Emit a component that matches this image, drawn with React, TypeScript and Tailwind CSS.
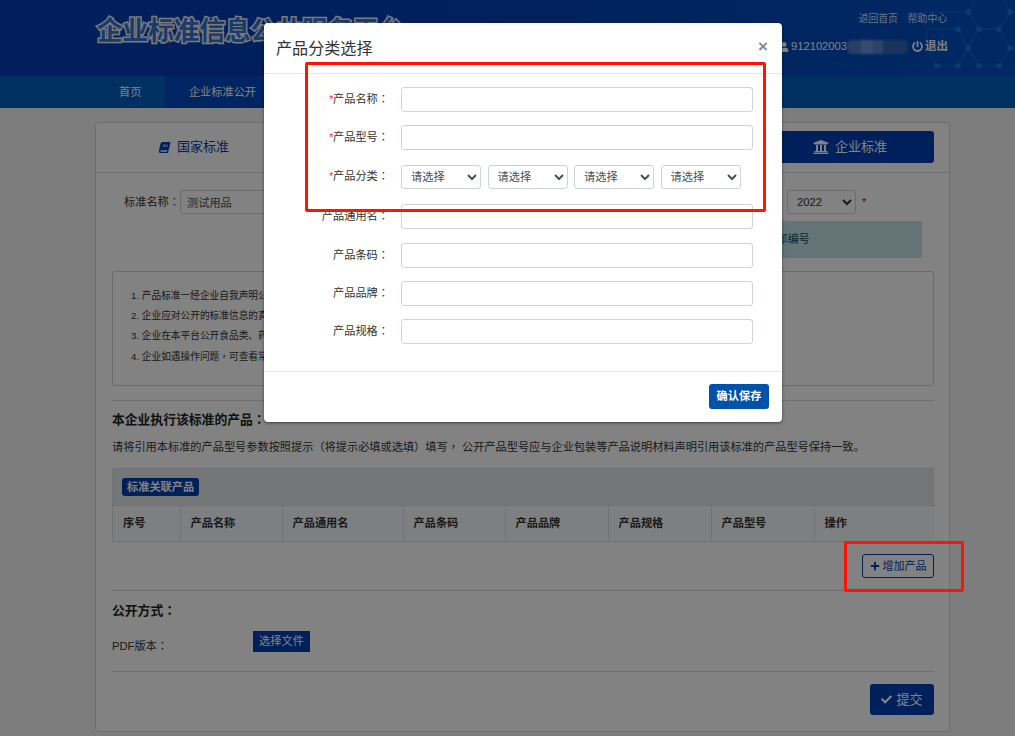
import React from 'react';
import { FaBook, FaUniversity, FaUser, FaPowerOff, FaPlus, FaCheck } from 'react-icons/fa';

const columns = [
  { name: '序号', width: 'w-[67px]' },
  { name: '产品名称', width: 'w-[102px]' },
  { name: '产品通用名', width: 'w-[121px]' },
  { name: '产品条码', width: 'w-[102px]' },
  { name: '产品品牌', width: 'w-[103px]' },
  { name: '产品规格', width: 'w-[103px]' },
  { name: '产品型号', width: 'w-[103px]' },
  { name: '操作', width: 'w-[121px]' },
];

const categorySelects = [1, 2, 3, 4];

// centred full-width punctuation, as in the reference
const Punct = ({ children }: { children: React.ReactNode }) => (
  <span className="font-[Noto_Sans_CJK_TC,sans-serif]">{children}</span>
);

const HexDecor = () => (
  <svg className="absolute right-0 top-0" width="105" height="76" viewBox="0 0 105 76" fill="none" stroke="#3a8ee8" strokeWidth="1">
    <g opacity="0.35">
      <path d="M17 29 L48 29 L58 48 L48 66 L27 66 L17 48 Z" />
      <path d="M58 12 L69 29 L89 29 L100 12 L89 -7 L69 -7 Z" />
      <path d="M69 66 L89 66 L100 48 L89 29 L69 29 L58 48 Z" />
      <path d="M10 12 L58 12 M100 48 L105 48 M100 12 L105 12" />
    </g>
    <g fill="#3a8ee8" stroke="none" opacity="0.45">
      <circle cx="58" cy="12" r="3" />
      <circle cx="100" cy="12" r="3" />
      <circle cx="48" cy="29" r="3" />
      <circle cx="69" cy="29" r="3" />
      <circle cx="89" cy="29" r="3" />
      <circle cx="58" cy="48" r="3" />
      <circle cx="100" cy="48" r="3" />
      <circle cx="27" cy="66" r="3" />
      <circle cx="48" cy="66" r="3" />
      <circle cx="69" cy="66" r="3" />
      <circle cx="89" cy="66" r="3" />
    </g>
  </svg>
);

const Field = ({ label, required, gapClass = 'mb-[13px]', children }: { label: string; required?: boolean; gapClass?: string; children?: React.ReactNode }) => (
  <div className={`flex items-center h-[25px] ${gapClass}`}>
    <label className="w-[125px] -mt-[1px] text-right text-[11.2px] text-[#333] shrink-0">
      {required && <span className="text-[#f22] text-[10px]">*</span>}
      {label}<Punct>：</Punct>
    </label>
    <div className="ml-[12px] flex-1">
      {children || <input className="block w-[352px] h-[25px] bg-white border border-[#ced4da] rounded-[3px]" />}
    </div>
  </div>
);

const App: React.FC = () => {
  return (
    <div className="relative h-[736px] w-[1015px] overflow-hidden bg-[#f6f6f6] font-[Liberation_Sans,Noto_Sans_CJK_SC,sans-serif] text-[11.2px] text-[#333]">
      <header className="relative h-[76px] bg-gradient-to-r from-[#003db4] via-[#0040b8] to-[#0052c4]">
        <HexDecor />
        <div className="relative h-full pl-[97px] pt-[14px]">
          <h1 className="text-[25.6px] leading-[34px] font-bold text-[#2f72d4] [-webkit-text-stroke:3px_#f0f0f0] [paint-order:stroke_fill]">企业标准信息公共服务平台</h1>
        </div>
        <div className="absolute right-[68px] top-[12px] flex gap-[10px] text-[9.8px] leading-[14px] text-[#cfe0ff]">
          <span>返回首页</span>
          <span>帮助中心</span>
        </div>
        <div className="absolute left-[778px] top-[38px] flex items-center text-white">
          <FaUser className="ml-[1px] w-[10px] h-[10px]" />
          <span className="ml-[2px] w-[56px] text-[11.2px]">912102003</span>
          <div className="flex w-[61px] h-[14px] rounded-[5px] overflow-hidden blur-[1px] bg-[#2f66b8]">
            <div className="w-[14px] bg-[#4a7cc8]" />
            <div className="w-[12px] bg-[#6b96d8]" />
            <div className="w-[10px] bg-[#5685cf]" />
          </div>
          <FaPowerOff className="ml-[4px] w-[11px] h-[11px]" />
          <span className="ml-[2px] text-[11.5px] font-bold">退出</span>
        </div>
      </header>

      <nav className="flex h-[32px] bg-[#005cc0] text-[11.2px] text-white leading-[32px]">
        <div className="w-[165px] pl-[119px]">首页</div>
        <div className="w-[115px] text-center bg-[#004ac0]">企业标准公开</div>
      </nav>

      <main className="ml-[95px] mt-[14px] w-[855px] h-[610px] bg-white border border-[#d8d8d8] rounded-[3px] overflow-hidden">
        <div className="flex justify-between h-[50px] pl-[16px] pr-[15px] pt-[8px] border-b border-[#d8d8d8]">
          <div className="flex items-center justify-center gap-[7px] w-[164px] h-[32px] text-[#0040b4] text-[13px]">
            <FaBook className="w-[11px] h-[11px] -skew-x-12" />
            <span>国家标准</span>
          </div>
          <div className="flex items-center justify-center gap-[6px] w-[168px] h-[32px] bg-[#0040b4] rounded-[3px] text-white text-[13px]">
            <FaUniversity className="w-[16px] h-[16px]" />
            <span>企业标准</span>
          </div>
        </div>

        <div className="pl-[16px] pr-[15px]">
          <div className="flex items-center h-[24px] mt-[17px]">
            <span className="ml-[12px] w-[56px]">标准名称<Punct>：</Punct></span>
            <input defaultValue="测试用品" className="w-[300px] h-[24px] px-[6px] bg-white border border-[#ced4da] rounded-[3px] text-[11.2px] text-[#495057]" />
            <select defaultValue="2022" className="ml-[307px] w-[69px] h-[24px] pl-[5px] bg-white border border-[#ced4da] rounded-[3px] text-[11.2px] text-[#333]">
              <option>2022</option>
            </select>
            <span className="ml-[6px] text-[#c00]">*</span>
          </div>

          <div className="ml-[400px] mt-[7px] w-[410px] h-[37px] pl-[253px] leading-[37px] bg-[#c4e2e8] rounded-[3px] text-[#0c5460]">全部编号</div>

          <div className="mt-[13px] h-[115px] pt-[14px] pl-[18px] border border-[#d0d0d0] rounded-[3px] leading-[20px] text-[9.7px]">
            <p className="h-[20px]">1. 产品标准一经企业自我声明公开</p>
            <p className="h-[20px]">2. 企业应对公开的标准信息的真实</p>
            <p className="h-[20px]">3. 企业在本平台公开食品类、药品</p>
            <p className="h-[20px]">4. 企业如遇操作问题<Punct>，</Punct>可查看<span className="text-[#0040b4]">常见</span></p>
          </div>

          <div className="mt-[14px] border-t border-[#d8d8d8] pt-[9px]">
            <h3 className="text-[12.8px] leading-[18px] font-bold text-[#222]">本企业执行该标准的产品<Punct>：</Punct></h3>
            <p className="mt-[8px] leading-[18px]">请将引用本标准的产品型号参数按照提示（将提示必填或选填）填写<Punct>，</Punct> 公开产品型号应与企业包装等产品说明材料声明引用该标准的产品型号保持一致。</p>
          </div>

          <div className="mt-[12px] border border-[#dbe1e7] border-b-0">
            <div className="h-[36px] pl-[9px] pt-[9px] bg-[#e4e8ec]">
              <span className="inline-block h-[18px] px-[5px] leading-[18px] bg-[#0040b4] rounded-[3px] text-white font-bold">标准关联产品</span>
            </div>
            <table className="w-full table-fixed border-collapse bg-[#f6f9fd]">
              <thead>
                <tr className="h-[36px] border-t border-b border-[#dbe1e7]">
                  {columns.map((col) => (
                    <th key={col.name} className={`${col.width} pl-[10px] text-left text-[11.2px] font-bold text-[#333] border-l first:border-l-0 border-[#dbe1e7]`}>{col.name}</th>
                  ))}
                </tr>
              </thead>
            </table>
          </div>

          <div className="flex justify-end mt-[12px]">
            <button className="flex items-center justify-center gap-[3px] w-[72px] h-[24px] bg-white border border-[#0040b4] rounded-[3px] text-[11px] text-[#0040b4]">
              <FaPlus className="w-[10px] h-[10px]" />
              增加产品
            </button>
          </div>

          <div className="mt-[12px] border-t border-[#d8d8d8] pt-[10px]">
            <h3 className="text-[12.8px] leading-[18px] font-bold text-[#222]">公开方式<Punct>：</Punct></h3>
            <div className="flex mt-[11px] h-[21px]">
              <span className="w-[141px] pt-[5px] leading-[18px]">PDF版本<Punct>：</Punct></span>
              <span className="w-[57px] h-[21px] leading-[20px] text-center bg-[#0040b4] text-white">选择文件</span>
            </div>
          </div>

          <div className="mt-[19px] border-t border-[#d8d8d8] pt-[12px] flex justify-end">
            <button className="flex items-center justify-center gap-[4px] w-[64px] h-[31px] bg-[#0040b4] rounded-[3px] text-[13px] text-white">
              <FaCheck className="w-[11px] h-[11px]" />
              提交
            </button>
          </div>
        </div>
      </main>

      {/* backdrop + modal */}
      <div className="absolute inset-0 bg-black/[0.49]">
        <div className="ml-[264px] mt-[23px] w-[518px] h-[399px] bg-white rounded-[4px] shadow-[0_1px_3px_rgba(0,0,0,0.5)]">
          <div className="flex items-center justify-between h-[51px] pl-[12px] pr-[14px] border-b border-[#e4e6e8]">
            <h4 className="text-[16.1px] text-[#333]">产品分类选择</h4>
            <span className="-mt-[3px] text-[17px] leading-none font-bold text-[#8a8a8a]">×</span>
          </div>
          <div className="h-[298px] pt-[13px] border-b border-[#e4e6e8]">
            <Field label="产品名称" required />
            <Field label="产品型号" required gapClass="mb-[14px]" />
            <Field label="产品分类" required gapClass="mb-[15px]">
              <div className="flex gap-[6.5px]">
                {categorySelects.map((n) => (
                  <select key={n} className="w-[80px] h-[24px] pl-[5px] bg-white border border-[#ced4da] rounded-[3px] text-[11.2px] text-[#495057]">
                    <option>请选择</option>
                  </select>
                ))}
              </div>
            </Field>
            <Field label="产品通用名" gapClass="mb-[14px]" />
            <Field label="产品条码" />
            <Field label="产品品牌" />
            <Field label="产品规格" />
          </div>
          <div className="flex justify-end pt-[12px] pr-[13px]">
            <button className="w-[60px] h-[25px] bg-[#0052a8] rounded-[3px] text-[11.2px] font-bold text-white">确认保存</button>
          </div>
        </div>
      </div>

      {/* red annotation boxes */}
      <div className="absolute left-[305px] top-[62px] w-[461px] h-[150px] border-[3px] border-[#ff1400] rounded-[2px]" />
      <div className="absolute left-[844px] top-[541px] w-[120px] h-[51px] border-[3px] border-[#ff1400] rounded-[2px]" />
    </div>
  );
};

export default App;
